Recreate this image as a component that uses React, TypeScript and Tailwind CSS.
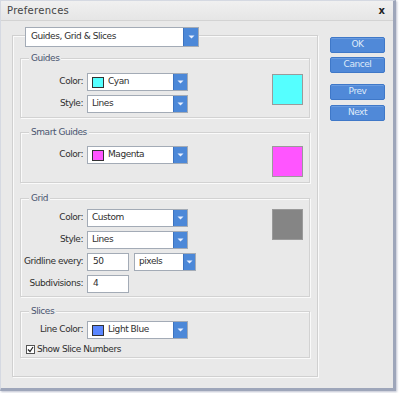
import React from "react";

const Arrow = () => (
  <svg width="7" height="4" viewBox="0 0 7 4" className="block">
    <path d="M0.5 0.5 L6.5 0.5 L3.5 3.5 Z" fill="#e8f0ff" />
  </svg>
);

function Select({
  box,
  btn,
  children,
}: {
  box: string;
  btn: string;
  children: React.ReactNode;
}) {
  return (
    <div className={box}>
      <div className="flex flex-1 items-center gap-[4px] pl-[4px] overflow-hidden whitespace-nowrap">{children}</div>
      <div className={btn}>
        <Arrow />
      </div>
    </div>
  );
}

const selBox = "flex h-[18px] w-[101px] border border-[#a3abb6] bg-white";
const selBtn = "flex w-[14px] items-center justify-center bg-[#4c88d8] border-l border-[#3d73c0]";

const Chip = ({ c }: { c: string }) => (
  <span className="inline-block h-[11px] w-[12px] border border-[#333]" style={{ background: c }} />
);

const Label = ({ children }: { children: React.ReactNode }) => (
  <div className="w-[62px] shrink-0 text-right whitespace-nowrap">{children}</div>
);

const Row = ({ label, children }: { label: string; children: React.ReactNode }) => (
  <div className="flex h-[18px] items-center gap-[4px]">
    <Label>{label}</Label>
    {children}
  </div>
);

const Swatch = ({ c }: { c: string }) => (
  <div className="ml-auto mr-[6px] h-[31px] w-[31px] border border-[#9a9a9a]" style={{ background: c }} />
);

const boxCls =
  "ml-[7px] w-[290px] border border-[#d2d2d2] shadow-[inset_1px_1px_0_#fafafa,1px_1px_0_#fafafa]";

const Legend = ({ children }: { children: React.ReactNode }) => (
  <div className="-mt-[7px] ml-[8px] w-fit bg-[#e9e9e9] px-[2px] leading-[12px] text-[#4a5570]">{children}</div>
);

const Btn = ({ children, cls }: { children: React.ReactNode; cls: string }) => (
  <div className={cls}>{children}</div>
);

const btnBase =
  "flex h-[16px] w-[55px] items-center justify-center rounded-[2px] border border-[#3f78c8] bg-[#5089d8] text-[#dfe9f8] shadow-[inset_0_1px_0_#6a9ce0]";

export default function App() {
  return (
    <div className="h-[393px] w-[400px] bg-white font-['DejaVu_Sans',sans-serif] text-[9px] tracking-[-0.45px] text-[#2e2e2e]">
      <div className="h-[391px] w-[396px] border-l border-t border-[#d5d9e2] border-r-[3px] border-b-[3px] border-r-[#9ea6ba] border-b-[#9ea6ba] bg-[#e9e9e9] shadow-[1px_1px_2px_rgba(110,120,150,0.45)]">
        {/* Title bar */}
        <div className="flex h-[20px] items-center justify-between border-b border-[#d3d3d3] bg-gradient-to-b from-[#f0f0f0] to-[#e6e6e6] pl-[6px] pr-[8px]">
          <span className="text-[10px] tracking-[0.3px] text-[#444]">Preferences</span>
          <span className="text-[10px] font-bold tracking-normal text-[#222]">x</span>
        </div>

        <div className="flex">
          {/* Main panel */}
          <div className="ml-[11px] mt-[14px] h-[342px] w-[306px] border border-[#d0d0d0] shadow-[inset_1px_1px_0_#fafafa,1px_1px_0_#fafafa]">
            <div className="-mt-[9px] ml-[12px]">
              <Select
                box="flex h-[20px] w-[174px] border border-[#a3abb6] bg-white"
                btn="flex w-[15px] items-center justify-center bg-[#4c88d8] border-l border-[#3d73c0]"
              >
                <span className="pl-[1px]">Guides, Grid &amp; Slices</span>
              </Select>
            </div>

            {/* Guides */}
            <div className={`${boxCls} mt-[11px]`}>
              <Legend>Guides</Legend>
              <div className="mt-[9px] flex pb-[4px]">
                <div className="flex flex-col gap-[4px]">
                  <Row label="Color:">
                    <Select box={selBox} btn={selBtn}>
                      <Chip c="#55ffff" />
                      <span>Cyan</span>
                    </Select>
                  </Row>
                  <Row label="Style:">
                    <Select box={selBox} btn={selBtn}>
                      <span>Lines</span>
                    </Select>
                  </Row>
                </div>
                <div className="ml-auto mr-[6px] mt-[1px] h-[31px] w-[31px] border border-[#9a9a9a] bg-[#55ffff]" />
              </div>
            </div>

            {/* Smart Guides */}
            <div className={`${boxCls} mt-[14px]`}>
              <Legend>Smart Guides</Legend>
              <div className="mt-[8px] flex pb-[5px]">
                <div className="flex flex-col gap-[4px]">
                  <Row label="Color:">
                    <Select box={selBox} btn={selBtn}>
                      <Chip c="#ff55ff" />
                      <span>Magenta</span>
                    </Select>
                  </Row>
                </div>
                <Swatch c="#ff55ff" />
              </div>
            </div>

            {/* Grid */}
            <div className={`${boxCls} mt-[15px]`}>
              <Legend>Grid</Legend>
              <div className="mt-[5px] flex pb-[3px]">
                <div className="flex flex-col gap-[4px]">
                  <Row label="Color:">
                    <Select box={selBox} btn={selBtn}>
                      <span>Custom</span>
                    </Select>
                  </Row>
                  <Row label="Style:">
                    <Select box={selBox} btn={selBtn}>
                      <span>Lines</span>
                    </Select>
                  </Row>
                  <Row label="Gridline every:">
                    <div className="flex h-[18px] w-[42px] items-center border border-[#a3abb6] bg-white pl-[5px]">50</div>
                    <Select
                      box="ml-[1px] flex h-[18px] w-[62px] border border-[#a3abb6] bg-white"
                      btn="flex w-[12px] items-center justify-center bg-[#4c88d8] border-l border-[#3d73c0]"
                    >
                      <span>pixels</span>
                    </Select>
                  </Row>
                  <Row label="Subdivisions:">
                    <div className="flex h-[18px] w-[42px] items-center border border-[#a3abb6] bg-white pl-[5px]">4</div>
                  </Row>
                </div>
                <Swatch c="#858585" />
              </div>
            </div>

            {/* Slices */}
            <div className={`${boxCls} mt-[14px]`}>
              <Legend>Slices</Legend>
              <div className="mt-[4px] flex flex-col pb-[2px]">
                <Row label="Line Color:">
                  <Select box={selBox} btn={selBtn}>
                    <Chip c="#5a86ff" />
                    <span>Light Blue</span>
                  </Select>
                </Row>
                <div className="ml-[5px] mt-[5px] flex h-[11px] items-center gap-[2px]">
                  <div className="flex h-[9px] w-[9px] items-center justify-center border border-[#555] bg-white">
                    <svg width="7" height="7" viewBox="0 0 7 7">
                      <path d="M1 3.5 L3 5.5 L6 1" stroke="#222" strokeWidth="1.2" fill="none" />
                    </svg>
                  </div>
                  <span>Show Slice Numbers</span>
                </div>
              </div>
            </div>
          </div>

          {/* Buttons */}
          <div className="ml-[12px] mt-[16px] flex flex-col">
            <Btn cls={btnBase}>OK</Btn>
            <Btn cls={`${btnBase} mt-[4px]`}>Cancel</Btn>
            <Btn cls={`${btnBase} mt-[11px]`}>Prev</Btn>
            <Btn cls={`${btnBase} mt-[5px]`}>Next</Btn>
          </div>
        </div>
      </div>
    </div>
  );
}
